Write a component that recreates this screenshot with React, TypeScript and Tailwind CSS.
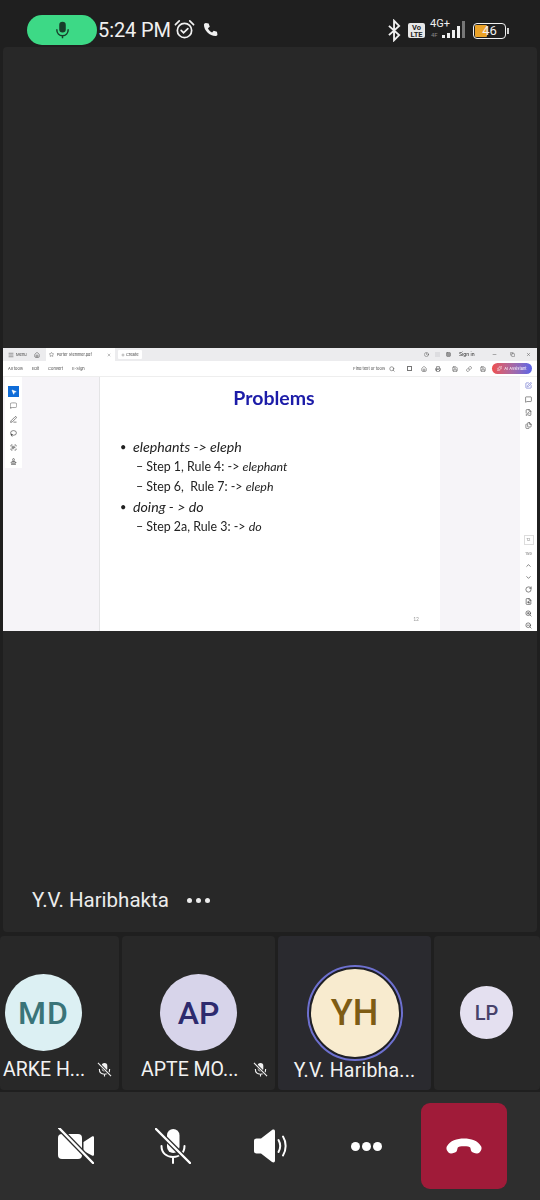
import React from 'react';
import { Search, Home, Clock, Grid3x3, Menu, Star, Plus, X, Minus, Copy, Link, Printer, Save, Sparkles, MousePointer2, MessageSquareDashed, PenLine, Lasso, ScanText, Stamp, SquarePen, MessageSquare, FilePen, Files, ChevronUp, ChevronDown, RotateCw, FileSearch, ZoomIn, ZoomOut } from 'lucide-react';

const roboto = { fontFamily: 'Roboto, sans-serif' };

function MutedMic({ className }: { className?: string }) {
  return (
    <svg viewBox="0 0 36 36" className={className}>
      <rect x="12" y="1" width="12.5" height="24" rx="6.25" fill="#fff" />
      <path d="M6.5 18c0 7 5 11 11.500 11s11.500-4 11.500-11M18 29v6" fill="none" stroke="#fff" strokeWidth="2" strokeLinecap="round" />
      <path d="M1 1l34 34" stroke="#2e2e2e" strokeWidth="5" />
      <path d="M1 1l34 34" stroke="#fff" strokeWidth="2.4" strokeLinecap="round" />
    </svg>
  );
}

function MutedCam({ className }: { className?: string }) {
  return (
    <svg viewBox="0 0 36 36" className={className}>
      <rect x="0" y="6" width="24" height="25" rx="4" fill="#fff" />
      <path d="M25.500 14l8.500-5.500c1-.6 2-.2 2 1v17c0 1.200-1 1.600-2 1L25.500 23z" fill="#fff" />
      <path d="M1 0l34 35" stroke="#2e2e2e" strokeWidth="5" />
      <path d="M1 0l34 35" stroke="#fff" strokeWidth="2.4" strokeLinecap="round" />
    </svg>
  );
}

function Speaker({ className }: { className?: string }) {
  return (
    <svg viewBox="0 0 36 36" className={className}>
      <path d="M1 13c0-1.500 1-2.500 2.500-2.500H8L19 2c1.500-1 3-.5 3 1.500v29c0 2-1.500 2.500-3 1.500L8 25.500H3.500C2 25.500 1 24.500 1 23z" fill="#fff" />
      <path d="M25.500 12c2 3.500 2 8.500 0 12M30 8.500c3.500 5.500 3.500 13.500 0 19" fill="none" stroke="#fff" strokeWidth="2" strokeLinecap="round" />
    </svg>
  );
}

function Hangup({ className }: { className?: string }) {
  return (
    <svg viewBox="0 0 36 16" className={className}>
      <path d="M.8 8.500C4 2.500 11 .5 18 .5s14 2 17.200 8c.6 1.500.4 3-.4 4.200-.9 1.500-2.300 3-4 2.800-2-.3-4.300-1-5.300-2-.9-1-.7-3-1.300-4-.5-.8-3-1.200-6.200-1.200s-5.700.4-6.200 1.200c-.6 1-.4 3-1.300 4-1 1-3.300 1.700-5.300 2-1.700.2-3.100-1.300-4-2.800C.4 11.500.2 10 .8 8.500z" fill="#fff" />
    </svg>
  );
}

function MutedSmall() {
  return (
    <svg viewBox="0 0 16 16" className="w-[15px] h-[15px] ml-auto mr-[7px] -mt-[2px]">
      <rect x="5" y="1" width="6" height="9" rx="3" fill="#f2f2f2" />
      <path d="M2.500 7.500C2.500 11 5 13 8 13s5.500-2 5.500-5.500M8 13v2.500" fill="none" stroke="#f2f2f2" strokeWidth="1.2" />
      <path d="M1 1l14 14" stroke="#292929" strokeWidth="3" />
      <path d="M1 1l14 14" stroke="#f2f2f2" strokeWidth="1.2" />
    </svg>
  );
}

interface TileProps {
  width: string;
  active?: boolean;
  children: React.ReactNode;
  name?: string;
  muted?: boolean;
  nameClass?: string;
}

function Tile({ width, active, children, name, muted, nameClass }: TileProps) {
  return (
    <div className={`${width} ${active ? 'bg-[#2a2a2f]' : 'bg-[#282828]'} h-[154px] shrink-0 rounded-[4px] flex flex-col items-center overflow-hidden`}>
      {children}
      {name && (
        <div className={`w-full flex items-center text-[19.5px] leading-[20px] text-[#f2f2f2] ${nameClass ?? ''}`}>
          <span>{name}</span>
          {muted && <MutedSmall />}
        </div>
      )}
    </div>
  );
}

function Avatar({ label, size, text, bg, color }: { label: string; size: string; text: string; bg: string; color: string }) {
  return <div className={`${size} ${text} ${bg} ${color} font-medium rounded-full flex items-center justify-center shrink-0`}>{label}</div>;
}

function SlideWindow() {
  const railIcon = 'w-[7px] h-[7px] text-[#333]';
  return (
    <div className="h-[283px] bg-white flex flex-col overflow-hidden blur-[0.3px]" style={{ fontFamily: 'Inter, sans-serif' }}>
      {/* title bar */}
      <div className="h-[13px] bg-[#ececee] flex items-center text-[4px] text-[#444] shrink-0">
        <Menu className="w-[6px] h-[6px] ml-[5px]" />
        <span className="ml-[2px]">Menu</span>
        <Home className="w-[6px] h-[6px] ml-[7px]" />
        <div className="ml-[6px] w-[69px] h-[13px] bg-white flex items-center px-[2px]">
          <Star className="w-[5px] h-[5px] ml-[1px]" />
          <span className="ml-[3px] text-[3.8px]">Porter Stemmer.pdf</span>
          <X className="w-[4px] h-[4px] ml-auto mr-[2px]" />
        </div>
        <div className="ml-[3px] bg-white rounded-[1px] w-[24px] h-[9px] flex items-center justify-center gap-[1px]">
          <Plus className="w-[4px] h-[4px]" />
          <span>Create</span>
        </div>
        <div className="ml-auto flex items-center">
          <Clock className="w-[5px] h-[5px]" />
          <div className="w-[5px] h-[5px] ml-[6px] bg-[#dddde0]" />
          <Grid3x3 className="w-[5px] h-[5px] ml-[6px]" />
          <span className="ml-[8px] w-[18px] text-[4.8px] font-medium whitespace-nowrap">Sign in</span>
          <Minus className="w-[5px] h-[5px] ml-[15px]" />
          <Copy className="w-[5px] h-[5px] ml-[13px]" />
          <X className="w-[5px] h-[5px] ml-[11px] mr-[6px]" />
        </div>
      </div>
      {/* toolbar */}
      <div className="h-[16px] bg-white border-b border-[#eee] flex items-center text-[4px] text-[#444] shrink-0">
        <span className="ml-[5px]">All tools</span>
        <span className="ml-[9px]">Edit</span>
        <span className="ml-[9px]">Convert</span>
        <span className="ml-[9px]">E-Sign</span>
        <div className="ml-auto flex items-center">
          <span>Find text or tools</span>
          <Search className="w-[6px] h-[6px] ml-[4px]" />
          <div className="w-[5px] h-[5px] ml-[12px] border-[0.5px] border-[#777]" />
          <Home className="w-[6px] h-[6px] ml-[9px]" />
          <Printer className="w-[6px] h-[6px] ml-[8px]" />
          <Save className="w-[6px] h-[6px] ml-[11px]" />
          <Link className="w-[6px] h-[6px] ml-[8px]" />
          <Save className="w-[6px] h-[6px] ml-[8px]" />
          <div className="ml-[6px] mr-[5px] w-[40px] h-[11px] rounded-full bg-gradient-to-r from-[#ee4d4d] to-[#5a63e8] text-white flex items-center justify-center gap-[2px]">
            <Sparkles className="w-[5px] h-[5px]" />
            <span>AI Assistant</span>
          </div>
        </div>
      </div>
      <div className="flex flex-1 min-h-0">
        {/* tools */}
        <div className="w-[97px] bg-[#f6f4f8] border-r border-[#e4e4e6] shrink-0 pl-[2px]">
          <div className="w-[17px] h-[91px] bg-white flex flex-col items-center pt-[9px] gap-[7px]">
            <div className="w-[11px] h-[11px] -mb-[2px] bg-[#0f6cd8] flex items-center justify-center">
              <MousePointer2 className="w-[6px] h-[6px] text-white" fill="#fff" />
            </div>
            <MessageSquareDashed className={railIcon} />
            <PenLine className={railIcon} />
            <Lasso className={railIcon} />
            <ScanText className={railIcon} />
            <Stamp className={railIcon} />
          </div>
        </div>
        {/* page */}
        <div className="w-[340px] bg-white shrink-0 relative" style={{ fontFamily: 'Lato, sans-serif' }}>
          <div className="mt-[9px] pl-[8px] text-center text-[19.5px] leading-[24px] font-bold text-[#1c1ca8]">Problems</div>
          <div className="pl-[20px] pt-[27px] text-[#222]">
            <div className="flex items-center h-[20px] text-[14.2px]"><span className="w-[13px] text-[11px]">•</span><i>elephants -&gt; eleph</i></div>
            <div className="flex items-center h-[20px] pl-[16px] text-[12.4px]">– Step 1, Rule 4: -&gt;&nbsp;<i>elephant</i></div>
            <div className="flex items-center h-[20px] pl-[16px] text-[12.4px]">– Step 6,&nbsp; Rule 7: -&gt;&nbsp;<i>eleph</i></div>
            <div className="flex items-center h-[20px] text-[14.2px]"><span className="w-[13px] text-[11px]">•</span><i>doing - &gt; do</i></div>
            <div className="flex items-center h-[20px] pl-[16px] text-[12.4px]">– Step 2a, Rule 3: -&gt;&nbsp;<i>do</i></div>
          </div>
          <span className="absolute right-[21px] bottom-[8px] text-[5px] text-[#999]">12</span>
        </div>
        <div className="w-[80px] bg-[#f6f4f8] shrink-0" />
        {/* right rail */}
        <div className="flex-1 bg-white flex flex-col items-center pt-[5px]">
          <SquarePen className="w-[7px] h-[7px] text-[#5a63c8]" />
          <MessageSquare className="w-[7px] h-[7px] text-[#444] mt-[7px]" />
          <FilePen className="w-[7px] h-[7px] text-[#444] mt-[6px]" />
          <Files className="w-[7px] h-[7px] text-[#444] mt-[6px]" />
          <div className="mt-auto flex flex-col items-center gap-[5px] pb-[2px]">
            <div className="w-[10px] h-[10px] border border-[#ddd] text-[4px] text-[#777] flex items-center justify-center">12</div>
            <span className="text-[4px] leading-[7px] text-[#777]">159</span>
            <ChevronUp className="w-[7px] h-[7px] text-[#333]" />
            <ChevronDown className="w-[7px] h-[7px] text-[#333]" />
            <RotateCw className="w-[7px] h-[7px] text-[#333]" />
            <FileSearch className="w-[7px] h-[7px] text-[#333]" />
            <ZoomIn className="w-[7px] h-[7px] text-[#333]" />
            <ZoomOut className="w-[7px] h-[7px] text-[#333]" />
          </div>
        </div>
      </div>
    </div>
  );
}

export default function App() {
  return (
    <div className="w-[540px] h-[1200px] bg-[#1f1f1f] flex flex-col overflow-hidden" style={roboto}>
      {/* status bar */}
      <div className="h-[47px] shrink-0 flex items-start pt-[15px] text-[#f0f0f0] relative">
        <div className="ml-[27px] w-[70px] h-[30px] bg-[#3dd986] rounded-full flex items-center justify-center">
          <svg viewBox="0 0 18 22" className="w-[15px] h-[18px]">
            <rect x="5" y="1" width="8" height="13" rx="4" fill="#173d2a" />
            <path d="M2 10c0 5 3 8 7 8s7-3 7-8M9 18v3" fill="none" stroke="#173d2a" strokeWidth="1.8" />
          </svg>
        </div>
        <span className="ml-[1px] text-[20px] leading-[30px] tracking-[-0.1px]">5:24 PM</span>
        <svg viewBox="0 0 22 22" className="w-[21px] h-[21px] ml-[3px] mt-[4px]" fill="none" stroke="#f0f0f0" strokeWidth="1.8">
          <circle cx="11" cy="12" r="7.5" />
          <path d="M7.500 12l2.500 2.500 4.500-4.500M1.500 6l4-4M20.500 6l-4-4" strokeLinecap="round" />
        </svg>
        <svg viewBox="0 0 16 16" className="w-[15px] h-[15px] ml-[8px] mt-[7px]">
          <path d="M3 1l3 .5 1.200 3.500-2 1.700c.8 2 2.500 3.700 4.500 4.500l1.700-2 3.500 1.200.5 3c0 1-1 1.600-2 1.600C7 15 1 9 1 3c0-1 1-2 2-2z" fill="#f0f0f0" />
        </svg>
        <div className="ml-auto flex items-start">
          <svg viewBox="0 0 14 24" className="w-[13px] h-[23px] mt-[4px]" fill="none" stroke="#f0f0f0" strokeWidth="2">
            <path d="M1 7l11 10-5.500 5.500V1.500L12 7 1 17" />
          </svg>
          <div className="ml-[7px] mt-[8px] w-[17px] h-[15px] rounded-[2px] bg-[#e8e8e8] text-[#1f1f1f] text-[7.5px] leading-[7px] font-bold flex flex-col items-center justify-center">
            <span>Vo</span>
            <span>LTE</span>
          </div>
          <div className="relative w-[41px] h-[24px] ml-[5px] mt-[3px]">
            <span className="absolute left-0 top-0 text-[11px] leading-[11px]">4G+</span>
            <svg viewBox="0 0 41 24" className="w-[41px] h-[24px]">
              <rect x="12" y="17" width="3" height="3" fill="#f0f0f0" />
              <rect x="17" y="15" width="3" height="5" fill="#f0f0f0" />
              <rect x="22" y="12" width="3" height="8" fill="#f0f0f0" />
              <rect x="27" y="8" width="3" height="12" fill="#f0f0f0" />
              <rect x="32" y="3" width="3" height="17" fill="#777" />
            </svg>
            <span className="absolute left-[1px] top-[13px] text-[6px] leading-[7px] text-[#888]">4F</span>
          </div>
          <div className="ml-[2px] mt-[8px] w-[33px] h-[16px] rounded-[4px] border-[1.5px] border-[#f0f0f0] p-[1px] flex overflow-hidden relative">
            <div className="w-[12px] bg-[#eba329] rounded-[1px]" />
            <span className="absolute left-0 right-0 top-0 text-center text-[13px] leading-[13px] text-[#f0f0f0]">46</span>
          </div>
          <div className="mt-[13px] mr-[31px] ml-[1px] w-[2px] h-[6px] bg-[#cfcfcf]" />
        </div>
      </div>

      {/* main stage */}
      <div className="h-[885px] mx-[3px] shrink-0 bg-[#282828] rounded-[4px] relative flex flex-col">
        <div className="h-[301px] shrink-0" />
        <SlideWindow />
        <div className="flex-1 flex items-end pb-[18px] pl-[29px]">
          <span className="text-[20.5px] leading-[28px] text-[#ececec]">Y.V. Haribhakta</span>
          <div className="ml-[18px] mb-[11px] flex gap-[4px]">
            <i className="w-[5px] h-[5px] rounded-full bg-[#ececec]" />
            <i className="w-[5px] h-[5px] rounded-full bg-[#ececec]" />
            <i className="w-[5px] h-[5px] rounded-full bg-[#ececec]" />
          </div>
        </div>
      </div>

      {/* participants */}
      <div className="mt-[4px] flex gap-[3px] shrink-0">
        <Tile width="w-[119px]" name="ARKE H..." muted nameClass="mt-[9px] pl-[3px]">
          <div className="w-full pt-[38px] pl-[5px]">
            <Avatar label="MD" size="w-[77px] h-[77px]" text="text-[32px] tracking-[1px]" bg="bg-[#dcf0f3]" color="text-[#3a7478]" />
          </div>
        </Tile>
        <Tile width="w-[153px]" name="APTE MO..." muted nameClass="mt-[9px] pl-[19px]">
          <div className="w-full pt-[38px] pl-[38px]">
            <Avatar label="AP" size="w-[77px] h-[77px]" text="text-[32px]" bg="bg-[#d7d4ea]" color="text-[#2d2a6e]" />
          </div>
        </Tile>
        <Tile width="w-[153px]" active name="Y.V. Haribha..." nameClass="justify-center tracking-[0.2px]">
          <div className="pt-[29px]">
            <div className="w-[96px] h-[96px] rounded-full border-[2.5px] border-[#6d70cf] p-[2px] bg-[#1f1f24]">
              <Avatar label="YH" size="w-full h-full" text="text-[36px]" bg="bg-[#f8ebcf]" color="text-[#7e5c14]" />
            </div>
          </div>
        </Tile>
        <Tile width="flex-1">
          <div className="pt-[50px] pr-[1px]">
            <Avatar label="LP" size="w-[53px] h-[53px]" text="text-[20px]" bg="bg-[#e4e0f0]" color="text-[#47426a]" />
          </div>
        </Tile>
      </div>

      {/* call controls */}
      <div className="mt-[2px] flex-1 bg-[#2e2e2e] flex items-center pl-[58px]">
        <MutedCam className="w-[36px] h-[36px]" />
        <MutedMic className="w-[36px] h-[36px] ml-[61px]" />
        <Speaker className="w-[36px] h-[36px] ml-[62px]" />
        <div className="ml-[62px] flex gap-[2px]">
          <i className="w-[9px] h-[9px] rounded-full bg-white" />
          <i className="w-[9px] h-[9px] rounded-full bg-white" />
          <i className="w-[9px] h-[9px] rounded-full bg-white" />
        </div>
        <div className="ml-[39px] w-[86px] h-[86px] rounded-[9px] bg-[#a01b39] flex items-center justify-center">
          <Hangup className="w-[36px] h-[16px]" />
        </div>
      </div>
    </div>
  );
}
